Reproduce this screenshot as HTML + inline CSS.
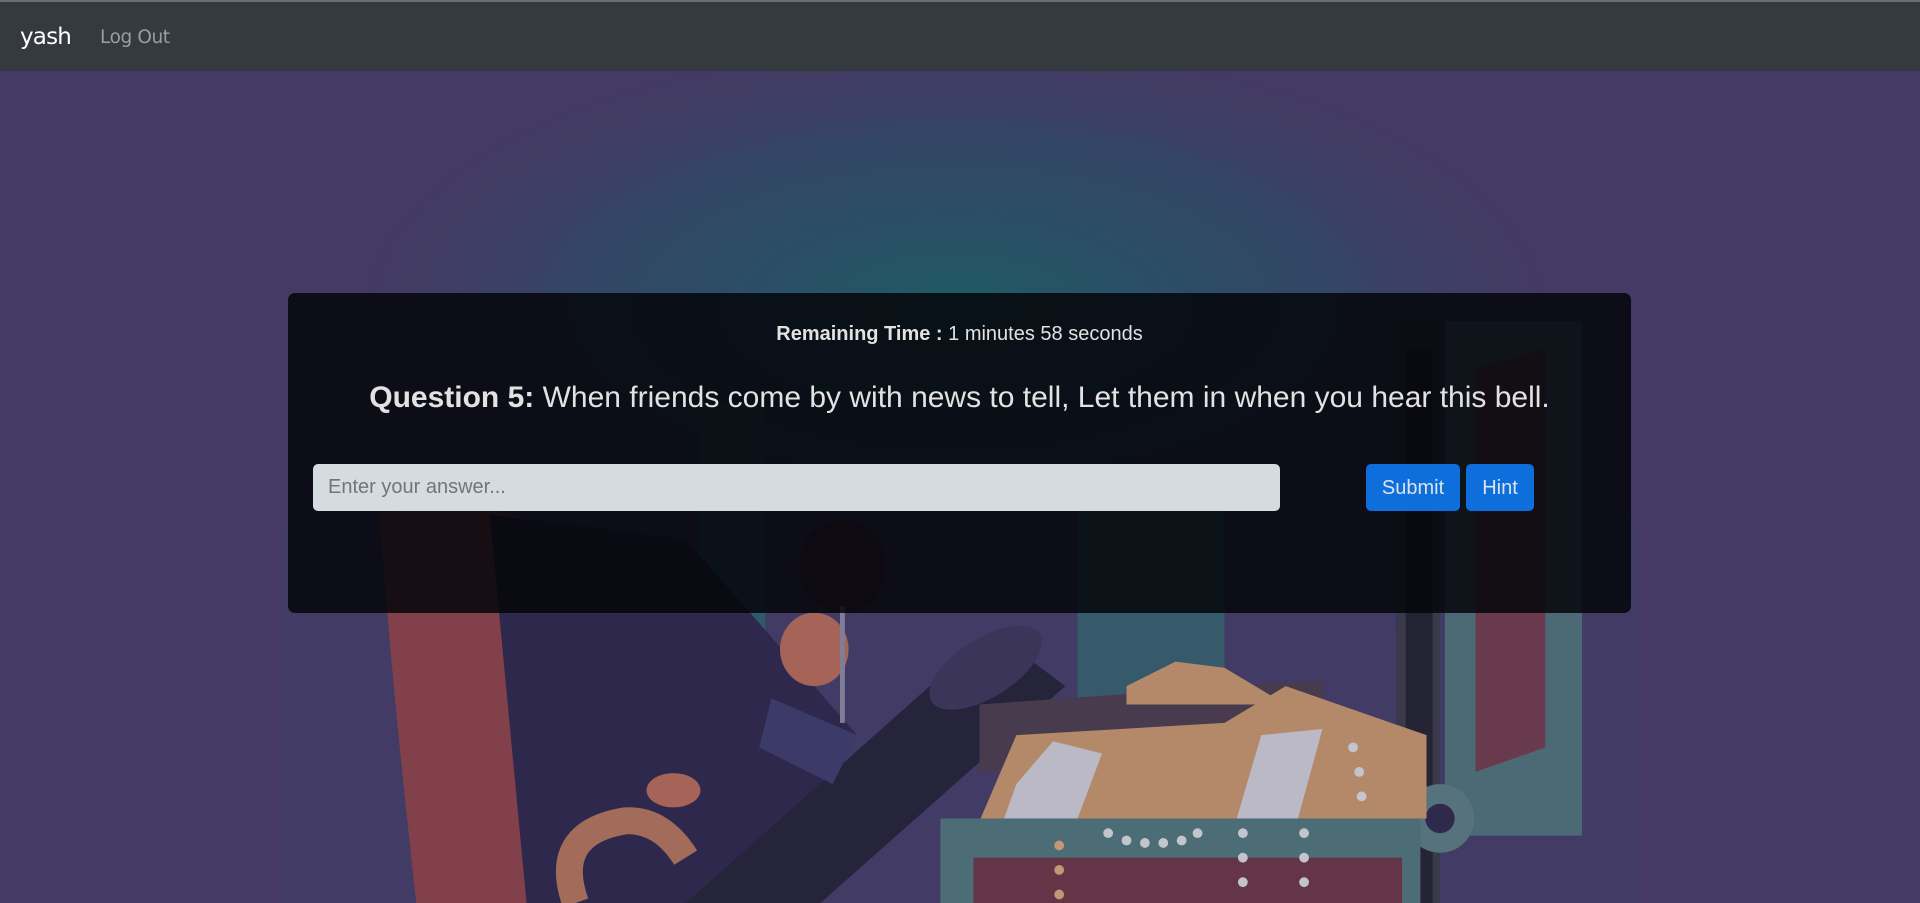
<!DOCTYPE html>
<html><head><meta charset="utf-8"><style>
html,body{margin:0;padding:0;width:1920px;height:903px;overflow:hidden;background:#443a63;font-family:"Liberation Sans",sans-serif}
#bg{position:absolute;left:0;top:0}
.nav{position:absolute;left:0;top:0;width:1920px;height:71px;background:#343a40;border-top:2px solid #6a6e73;box-sizing:border-box}
.brand{position:absolute;left:20px;top:22px;font-size:23px;color:#fff;font-family:"DejaVu Sans","Liberation Sans",sans-serif;letter-spacing:-0.8px}
.lo{position:absolute;left:100px;top:25px;font-size:18.5px;color:#9a9da1;font-family:"DejaVu Sans","Liberation Sans",sans-serif;letter-spacing:-0.4px}
.card{position:absolute;left:288px;top:293px;width:1343px;height:320px;background:rgba(5,6,10,0.86);border-radius:7px}
.timer{position:absolute;left:0;width:100%;top:30px;text-align:center;color:#e2e2e2;font-size:20px}
.q{position:absolute;left:0;width:100%;top:88px;text-align:center;color:#e2e2e2;font-size:30px}
.inp{position:absolute;left:25px;top:171px;width:967px;height:47px;background:#d5dbdf;border-radius:5px;box-sizing:border-box;padding:12px 15px;color:#6f767c;font-size:20px}
.btn{position:absolute;top:171px;height:47px;background:#0d6edc;border-radius:5px;color:#dde3ea;font-size:20px;text-align:center;line-height:48px}
</style></head><body>
<svg id="bg" width="1920" height="903" viewBox="0 0 1568 737" preserveAspectRatio="none">
<defs>
<radialGradient id="g1" cx="0.5" cy="0.5" r="0.5"><stop offset="0" stop-color="#1f5a66"/><stop offset="0.6" stop-color="#2c4b66" stop-opacity="0.7"/><stop offset="1" stop-color="#443a63" stop-opacity="0"/></radialGradient>
</defs>
<rect width="1568" height="737" fill="#443a63"/>
<ellipse cx="780" cy="250" rx="520" ry="230" fill="url(#g1)"/>
<rect x="230" y="420" width="1110" height="317" fill="#3f3c68" opacity="0.6"/>
<g opacity="0.85">
<rect x="570" y="330" width="55" height="407" fill="#2e5f6c"/>
<rect x="880" y="400" width="120" height="200" fill="#35606a"/>
<rect x="1140" y="262" width="36" height="475" fill="#3a3a48"/>
<rect x="1148" y="285" width="22" height="452" fill="#20202c"/>
<rect x="1180" y="262" width="112" height="420" fill="#4d7379"/>
<polygon points="1205,300 1262,285 1262,610 1205,630" fill="#713a4a"/>
<circle cx="1176" cy="668" r="28" fill="#5a7d82"/><circle cx="1176" cy="668" r="12" fill="#2d2648"/>
<path d="M310 420 Q390 400 440 430 L470 737 L340 737 Q320 560 310 420Z" fill="#8e4147"/>
<polygon points="400,420 560,440 700,600 620,737 430,737" fill="#2b2648"/>
<polygon points="560,737 670,737 870,560 810,515" fill="#222033"/>
<ellipse cx="805" cy="545" rx="52" ry="24" transform="rotate(-32 805 545)" fill="#3b3658"/>
<polygon points="630,570 700,600 680,640 620,610" fill="#3c3a6a"/>
<ellipse cx="665" cy="530" rx="28" ry="30" fill="#b86c58"/>
<ellipse cx="688" cy="462" rx="36" ry="38" fill="#4a2432"/>
<rect x="686" y="495" width="4" height="95" fill="#8a8aa0"/>
<ellipse cx="550" cy="645" rx="22" ry="14" fill="#b86c58"/>
<path d="M470 737 Q450 680 510 670 Q540 668 560 700" stroke="#b57458" stroke-width="22" fill="none"/>
<polygon points="800,575 1080,555 1085,610 800,630" fill="#4a3b4a"/>
<polygon points="800,670 830,600 1000,590 1050,560 1165,600 1165,668" fill="#c8976c"/>
<polygon points="830,640 860,605 900,615 880,668 820,668" fill="#d0d0d6"/>
<polygon points="1010,668 1030,600 1080,595 1060,668" fill="#d0d0d6"/>
<polygon points="920,560 960,540 1000,545 1050,575 920,575" fill="#c8976c"/>
<rect x="768" y="668" width="392" height="69" fill="#4f7579"/>
<rect x="795" y="700" width="350" height="37" fill="#6a3442"/>
<g fill="#dcdce0">
<circle cx="905" cy="680" r="4"/><circle cx="920" cy="686" r="4"/><circle cx="935" cy="688" r="4"/><circle cx="950" cy="688" r="4"/><circle cx="965" cy="686" r="4"/><circle cx="978" cy="680" r="4"/>
<circle cx="1015" cy="680" r="4"/><circle cx="1015" cy="700" r="4"/><circle cx="1015" cy="720" r="4"/><circle cx="1065" cy="680" r="4"/><circle cx="1065" cy="700" r="4"/><circle cx="1065" cy="720" r="4"/>
<circle cx="1105" cy="610" r="4"/><circle cx="1110" cy="630" r="4"/><circle cx="1112" cy="650" r="4"/>
</g>
<circle cx="865" cy="690" r="4" fill="#d8a878"/><circle cx="865" cy="710" r="4" fill="#d8a878"/><circle cx="865" cy="730" r="4" fill="#d8a878"/>
</g>
</svg>
<div class="nav"><div class="brand">yash</div><div class="lo">Log Out</div></div>
<div class="card">
<div class="timer"><b>Remaining Time :</b> 1 minutes 58 seconds</div>
<div class="q"><b>Question 5:</b> When friends come by with news to tell, Let them in when you hear this bell.</div>
<div class="inp">Enter your answer...</div>
<div class="btn" style="left:1078px;width:94px">Submit</div>
<div class="btn" style="left:1178px;width:68px">Hint</div>
</div>
</body></html>
